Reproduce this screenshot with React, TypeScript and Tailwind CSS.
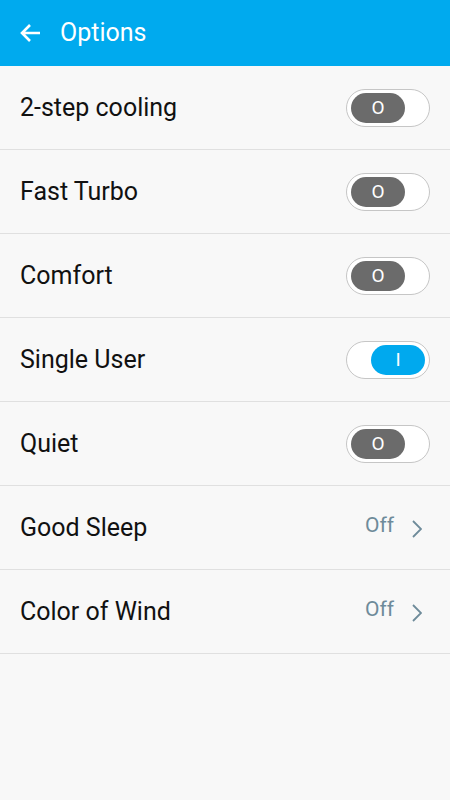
import React, { useState } from 'react';

type Item =
  | { label: string; kind: 'switch'; on: boolean }
  | { label: string; kind: 'link'; value: string };

const items: Item[] = [
  { label: '2-step cooling', kind: 'switch', on: false },
  { label: 'Fast Turbo', kind: 'switch', on: false },
  { label: 'Comfort', kind: 'switch', on: false },
  { label: 'Single User', kind: 'switch', on: true },
  { label: 'Quiet', kind: 'switch', on: false },
  { label: 'Good Sleep', kind: 'link', value: 'Off' },
  { label: 'Color of Wind', kind: 'link', value: 'Off' },
];

function Toggle({ on, onClick }: { on: boolean; onClick: () => void }) {
  return (
    <button
      onClick={onClick}
      className={`flex h-[38px] w-[84px] items-center rounded-full border border-[#c6c6c6] bg-white px-[4px] ${
        on ? 'justify-end' : 'justify-start'
      }`}
    >
      <span
        className={`flex h-[30px] w-[54px] items-center justify-center rounded-full text-[19px] leading-none text-white ${
          on ? 'bg-[#00a9ee]' : 'bg-[#6b6b6b]'
        }`}
      >
        {on ? 'I' : 'O'}
      </span>
    </button>
  );
}

export default function App() {
  const [state, setState] = useState(items);

  const flip = (i: number) =>
    setState((s) =>
      s.map((it, j) => (j === i && it.kind === 'switch' ? { ...it, on: !it.on } : it))
    );

  return (
    <div className="min-h-[800px] w-full bg-[#f8f8f8] font-['Roboto',sans-serif]">
      {/* Header */}
      <header className="flex h-[66px] items-center bg-[#00aaee] px-5">
        <svg width="21" height="20" viewBox="0 0 21 20" fill="none">
          <path d="M20 10H2M10 2L2 10l8 8" stroke="white" strokeWidth="2.6" />
        </svg>
        <h1 className="ml-[19px] text-[25px] text-white">Options</h1>
      </header>

      <ul>
        {state.map((it, i) => (
          <li
            key={it.label}
            className="flex h-[84px] items-center justify-between border-b border-[#e0e0e0] pl-5 pr-[20px]"
          >
            <span className="text-[25px] text-[#111]">{it.label}</span>
            {it.kind === 'switch' ? (
              <Toggle on={it.on} onClick={() => flip(i)} />
            ) : (
              <span className="mt-[-4px] flex items-center gap-[18px] pr-[8px] text-[21px] text-[#6e8b9a]">
                {it.value}
                <svg width="10" height="18" viewBox="0 0 10 18" fill="none" className="mt-[6px]">
                  <path d="M1 1l8 8-8 8" stroke="#6e8b9a" strokeWidth="1.8" />
                </svg>
              </span>
            )}
          </li>
        ))}
      </ul>
    </div>
  );
}
